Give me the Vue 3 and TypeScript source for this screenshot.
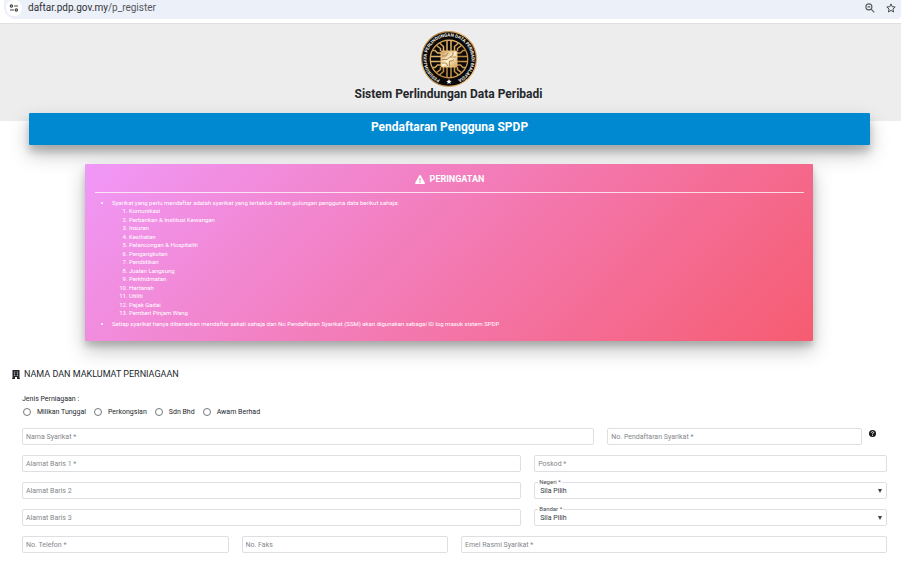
<script setup lang="ts">
import { ref } from 'vue'

const sectors: string[] = [
  'Komunikasi',
  'Perbankan & Institusi Kewangan',
  'Insuran',
  'Kesihatan',
  'Pelancongan & Hospitaliti',
  'Pengangkutan',
  'Pendidikan',
  'Jualan Langsung',
  'Perkhidmatan',
  'Hartanah',
  'Utiliti',
  'Pajak Gadai',
  'Pemberi Pinjam Wang',
]

const businessTypes: string[] = ['Milikan Tunggal', 'Perkongsian', 'Sdn Bhd', 'Awam Berhad']
const businessType = ref('')

interface Field {
  id: string
  label: string
  kind: 'text' | 'select' | 'help'
  span: string
}

const fields: Field[] = [
  { id: 'nama', label: 'Nama Syarikat *', kind: 'text', span: 'span-8' },
  { id: 'nombor', label: 'No. Pendaftaran Syarikat *', kind: 'help', span: 'span-4' },
  { id: 'alamat1', label: 'Alamat Baris 1 *', kind: 'text', span: 'span-7' },
  { id: 'poskod', label: 'Poskod *', kind: 'text', span: 'span-5' },
  { id: 'alamat2', label: 'Alamat Baris 2', kind: 'text', span: 'span-7' },
  { id: 'negeri', label: 'Negeri *', kind: 'select', span: 'span-5' },
  { id: 'alamat3', label: 'Alamat Baris 3', kind: 'text', span: 'span-7' },
  { id: 'bandar', label: 'Bandar *', kind: 'select', span: 'span-5' },
  { id: 'telefon', label: 'No. Telefon *', kind: 'text', span: 'span-3' },
  { id: 'faks', label: 'No. Faks', kind: 'text', span: 'span-3' },
  { id: 'emel', label: 'Emel Rasmi Syarikat *', kind: 'text', span: 'span-6' },
]
</script>

<template>
  <div class="page">
    <div class="browser-bar">
      <div class="address">
        <button class="site-info" type="button" aria-label="Site information">
          <svg viewBox="0 0 10 8" width="10" height="8" fill="none" stroke="#474747" stroke-width="1.2">
            <circle cx="2.4" cy="2" r="1.1" />
            <path d="M5 2h4M1 6h4" />
            <circle cx="7.4" cy="6" r="1.1" />
          </svg>
        </button>
        <span class="url">daftar.pdp.gov.my<span class="path">/p_register</span></span>
        <button class="tool" type="button" aria-label="Zoom">
          <svg viewBox="0 0 10 10" width="10" height="10" fill="none" stroke="#55575b" stroke-width="1.1">
            <circle cx="3.9" cy="3.9" r="3" />
            <path d="M2.6 3.9h2.6M6.1 6.1l3.2 3.2" />
          </svg>
        </button>
        <button class="tool" type="button" aria-label="Bookmark">
          <svg viewBox="0 0 10 10" width="10" height="10" fill="none" stroke="#4a4c50" stroke-width="1">
            <path d="M5 .9l1.2 2.8 3 .3-2.3 2 .7 3L5 7.4 2.4 9l.7-3L.8 4l3-.3z" />
          </svg>
        </button>
      </div>
    </div>

    <header class="masthead">
      <svg class="crest" viewBox="0 0 112 112" width="56" height="56">
        <defs>
          <linearGradient id="gold" gradientUnits="userSpaceOnUse" x1="10" y1="10" x2="102" y2="102">
            <stop offset="0" stop-color="#9a6a28" />
            <stop offset=".35" stop-color="#e8b86c" />
            <stop offset=".6" stop-color="#b9833a" />
            <stop offset="1" stop-color="#f0c681" />
          </linearGradient>
          <linearGradient id="chip" x1="0" y1="0" x2="1" y2="1">
            <stop offset="0" stop-color="#c69552" />
            <stop offset=".5" stop-color="#fff1cf" />
            <stop offset="1" stop-color="#d3a15c" />
          </linearGradient>
          <path id="ring" d="M40.6 98.3A45 45 0 1 1 71.4 98.3" />
        </defs>
        <circle cx="56" cy="56" r="54.800" fill="#0b0a09" stroke="url(#gold)" stroke-width="2.400" />
        <circle cx="56" cy="56" r="37.500" fill="#0b0a09" stroke="url(#gold)" stroke-width="2.600" />
        <g fill="none" stroke="url(#gold)" stroke-width="3">
          <path d="M52 40V20M60 40V20M45 40V31l-8-7M67 40V31l8-7M39 40v-5l-8-6M73 40v-5l8-6" />
          <path d="M52 72v20M60 72v20M45 72v9l-8 7M67 72v9l8 7M39 72v5l-8 6M73 72v5l8 6" />
          <path d="M40 44h-7l-5-5h-5M40 51H20M40 61H20M40 68h-7l-5 5h-5" />
          <path d="M72 44h7l5-5h5M72 51h20M72 61h20M72 68h7l5 5h5" />
        </g>
        <rect x="40" y="40" width="32" height="32" rx="2" fill="url(#chip)" stroke="#e9be79" stroke-width="2" />
        <path d="M42 50h8l4-6M42 57h10l6-5h12M42 64h8l4 6M57 70V60h6l2-3M64 42v6l-6 4" fill="none" stroke="#9c6e33" stroke-width="1.500" />
        <text class="motto" fill="#f4f1ea">
          <textPath href="#ring" startOffset="50%" text-anchor="middle">PESURUHJAYA PERLINDUNGAN DATA PERIBADI MALAYSIA</textPath>
        </text>
        <path d="M56 96l1.600 3.400 3.700.400-2.800 2.500.8 3.700-3.300-1.900-3.300 1.900.8-3.700-2.800-2.500 3.700-.400z" fill="#fff" />
      </svg>
      <h1>Sistem Perlindungan Data Peribadi</h1>
    </header>

    <main>
      <h2 class="banner">Pendaftaran Pengguna SPDP</h2>

      <section class="warning">
        <h3>
          <svg viewBox="0 0 10 9" width="10" height="9">
            <path d="M5 0Q5.500 0 5.800.500L9.800 7.700Q10.200 9 9 9H1Q-.2 9 .2 7.700L4.200.500Q4.500 0 5 0z" fill="#fff" />
            <path d="M5 3v2.700M5 6.500v1.200" stroke="#f27aae" stroke-width="1.100" />
          </svg>
          PERINGATAN
        </h3>
        <ul>
          <li>
            Syarikat yang perlu mendaftar adalah syarikat yang tertakluk dalam golongan pengguna data berikut sahaja:
            <ol>
              <li v-for="sector in sectors" :key="sector">{{ sector }}</li>
            </ol>
          </li>
          <li>
            Setiap syarikat hanya dibenarkan mendaftar sekali sahaja dan No Pendaftaran Syarikat (SSM) akan digunakan sebagai ID log masuk sistem SPDP
          </li>
        </ul>
      </section>

      <form class="details" @submit.prevent>
        <h3>
          <svg viewBox="0 0 8 9" width="8" height="9">
            <path d="M.5 0h7v8.200H8V9H5V7H3v2H0v-.8h.5z" fill="#24282c" />
            <path d="M2 1.500h1.200v1H2zM4.800 1.500H6v1H4.800zM2 3.300h1.200v1H2zM4.800 3.300H6v1H4.800zM2 5.100h1.200v1H2zM4.800 5.100H6v1H4.800z" fill="#b9bbbd" />
          </svg>
          NAMA DAN MAKLUMAT PERNIAGAAN
        </h3>

        <fieldset>
          <legend>Jenis Perniagaan :</legend>
          <div class="choices">
            <label v-for="item in businessTypes" :key="item">
              <input v-model="businessType" type="radio" name="jenis" :value="item" />
              {{ item }}
            </label>
          </div>
        </fieldset>

        <div class="grid">
          <div v-for="field in fields" :key="field.id" class="field" :class="field.span">
            <template v-if="field.kind === 'select'">
              <label class="floating" :for="field.id">{{ field.label }}</label>
              <select :id="field.id">
                <option>Sila Pilih</option>
              </select>
              <svg class="caret" viewBox="0 0 4 4" width="4" height="4">
                <path d="M0 0h4L2 4z" fill="#3b3f44" />
              </svg>
            </template>
            <template v-else>
              <input :id="field.id" type="text" :placeholder="field.label" :aria-label="field.label" />
              <button v-if="field.kind === 'help'" class="help" type="button" aria-label="Bantuan">
                <svg viewBox="0 0 7 7" width="7" height="7">
                  <circle cx="3.500" cy="3.500" r="3.500" fill="#15181b" />
                  <path d="M2.300 2.700Q2.500 1.600 3.500 1.600T4.700 2.600Q4.700 3.200 3.500 3.600V4.300M3.500 4.900v.9" fill="none" stroke="#fff" stroke-width=".9" />
                </svg>
              </button>
            </template>
          </div>
        </div>
      </form>
    </main>
  </div>
</template>

<style>
body {
  margin: 0;
  background: #fff;
}
</style>

<style scoped>
.page {
  font-family: Roboto, "Liberation Sans", sans-serif;
  color: #24282c;
  overflow: hidden;
}

h1,
h2,
h3 {
  margin: 0;
}

button {
  border: 0;
  padding: 0;
  background: none;
  display: flex;
  align-items: center;
  justify-content: center;
}

.browser-bar {
  padding: 0 0 4px 4px;
  border-bottom: 1px solid #e0e0e0;
}

.address {
  display: flex;
  align-items: center;
  height: 19px;
  padding: 0 5px 0 2px;
  border-radius: 0 0 4px 12px;
  background: #ecf0f9;
}

.site-info {
  width: 16px;
  height: 16px;
  margin-bottom: 3px;
  border-radius: 50%;
  background: #fff;
}

.url {
  flex: 1;
  margin: 0 0 3px 6px;
  font-size: 10px;
  line-height: 12px;
  color: #303236;
}

.path {
  color: #55585d;
}

.tool {
  margin: 0 0 3px 11px;
}

.masthead {
  display: flex;
  flex-direction: column;
  align-items: center;
  padding: 7px 4px 19px 0;
  background: #ededed;
}

.crest {
  display: block;
}

.motto {
  font-size: 9px;
  font-weight: 700;
}

h1 {
  font-size: 12px;
  font-weight: 700;
  line-height: 15px;
}

.banner {
  position: relative;
  margin: -8px 31px 0 29px;
  padding: 5px 0 9px;
  border-radius: 1px;
  background: #0089d0;
  color: #fff;
  font-size: 12px;
  font-weight: 700;
  line-height: 18px;
  text-align: center;
  box-shadow: 0 9px 19px rgba(0, 0, 0, 0.25), 0 7px 7px rgba(0, 0, 0, 0.16);
}

.warning {
  position: relative;
  margin: 19px 88px 0 85px;
  padding: 9px 9px 13px 10px;
  border-radius: 1px;
  background: linear-gradient(135deg, #f098f8 0%, #f65c70 100%);
  color: #fff;
  box-shadow: 0 9px 19px rgba(0, 0, 0, 0.25), 0 5px 6px rgba(0, 0, 0, 0.16);
}

.warning h3 {
  display: flex;
  justify-content: center;
  align-items: center;
  gap: 5px;
  padding-bottom: 7px;
  border-bottom: 1px solid rgba(255, 255, 255, 0.75);
  font-size: 9px;
  font-weight: 700;
  line-height: 12px;
}

.warning ul {
  margin: 6px 0 0;
  padding-left: 17px;
  font-size: 6px;
  font-weight: 400;
  line-height: 8px;
}

.warning ol {
  display: grid;
  align-content: space-between;
  min-height: 110px;
  margin: 0 0 3px;
  padding-left: 17px;
}

.details {
  padding: 26px 14px 0 12px;
}

.details h3 {
  display: flex;
  align-items: center;
  gap: 4px;
  font-size: 9px;
  font-weight: 400;
  line-height: 14px;
}

fieldset {
  margin: 13px 0 0 10px;
  padding: 0;
  border: 0;
  font-size: 7px;
  line-height: 10px;
}

legend {
  padding: 0;
}

.choices {
  display: flex;
  gap: 8px;
  padding: 3px 0 0 1px;
}

.choices label {
  display: flex;
  align-items: center;
  gap: 6px;
}

.choices input {
  appearance: none;
  width: 8px;
  height: 8px;
  margin: 0;
  border: 1px solid #75787b;
  border-radius: 50%;
}

.choices input:checked {
  background: #0089d0;
}

.grid {
  display: grid;
  grid-template-columns: repeat(12, minmax(0, 1fr));
  gap: 10px 13px;
  margin: 11px 0 0 10px;
}

.span-3 {
  grid-column: span 3;
}

.span-4 {
  grid-column: span 4;
}

.span-5 {
  grid-column: span 5;
}

.span-6 {
  grid-column: span 6;
}

.span-7 {
  grid-column: span 7;
}

.span-8 {
  grid-column: span 8;
}

.field {
  position: relative;
  display: flex;
}

.field input,
.field select {
  appearance: none;
  box-sizing: border-box;
  flex: 1;
  min-width: 0;
  height: 17px;
  margin: 0;
  padding: 0 3px;
  border: 1px solid #dddfe3;
  border-radius: 2px;
  background: #fff;
  color: #343a40;
  font-family: inherit;
  font-size: 7px;
}

.field select {
  padding: 0 5px;
}

.field input::placeholder {
  color: #84878b;
  opacity: 1;
}

.floating {
  position: absolute;
  top: -4px;
  left: 4px;
  padding: 0 1px;
  background: #fff;
  color: #4a4d51;
  font-size: 6px;
  line-height: 7px;
}

.caret {
  position: absolute;
  top: 7px;
  right: 5px;
}

.help {
  align-self: flex-start;
  margin: 2px 11px 0 7px;
}
</style>
